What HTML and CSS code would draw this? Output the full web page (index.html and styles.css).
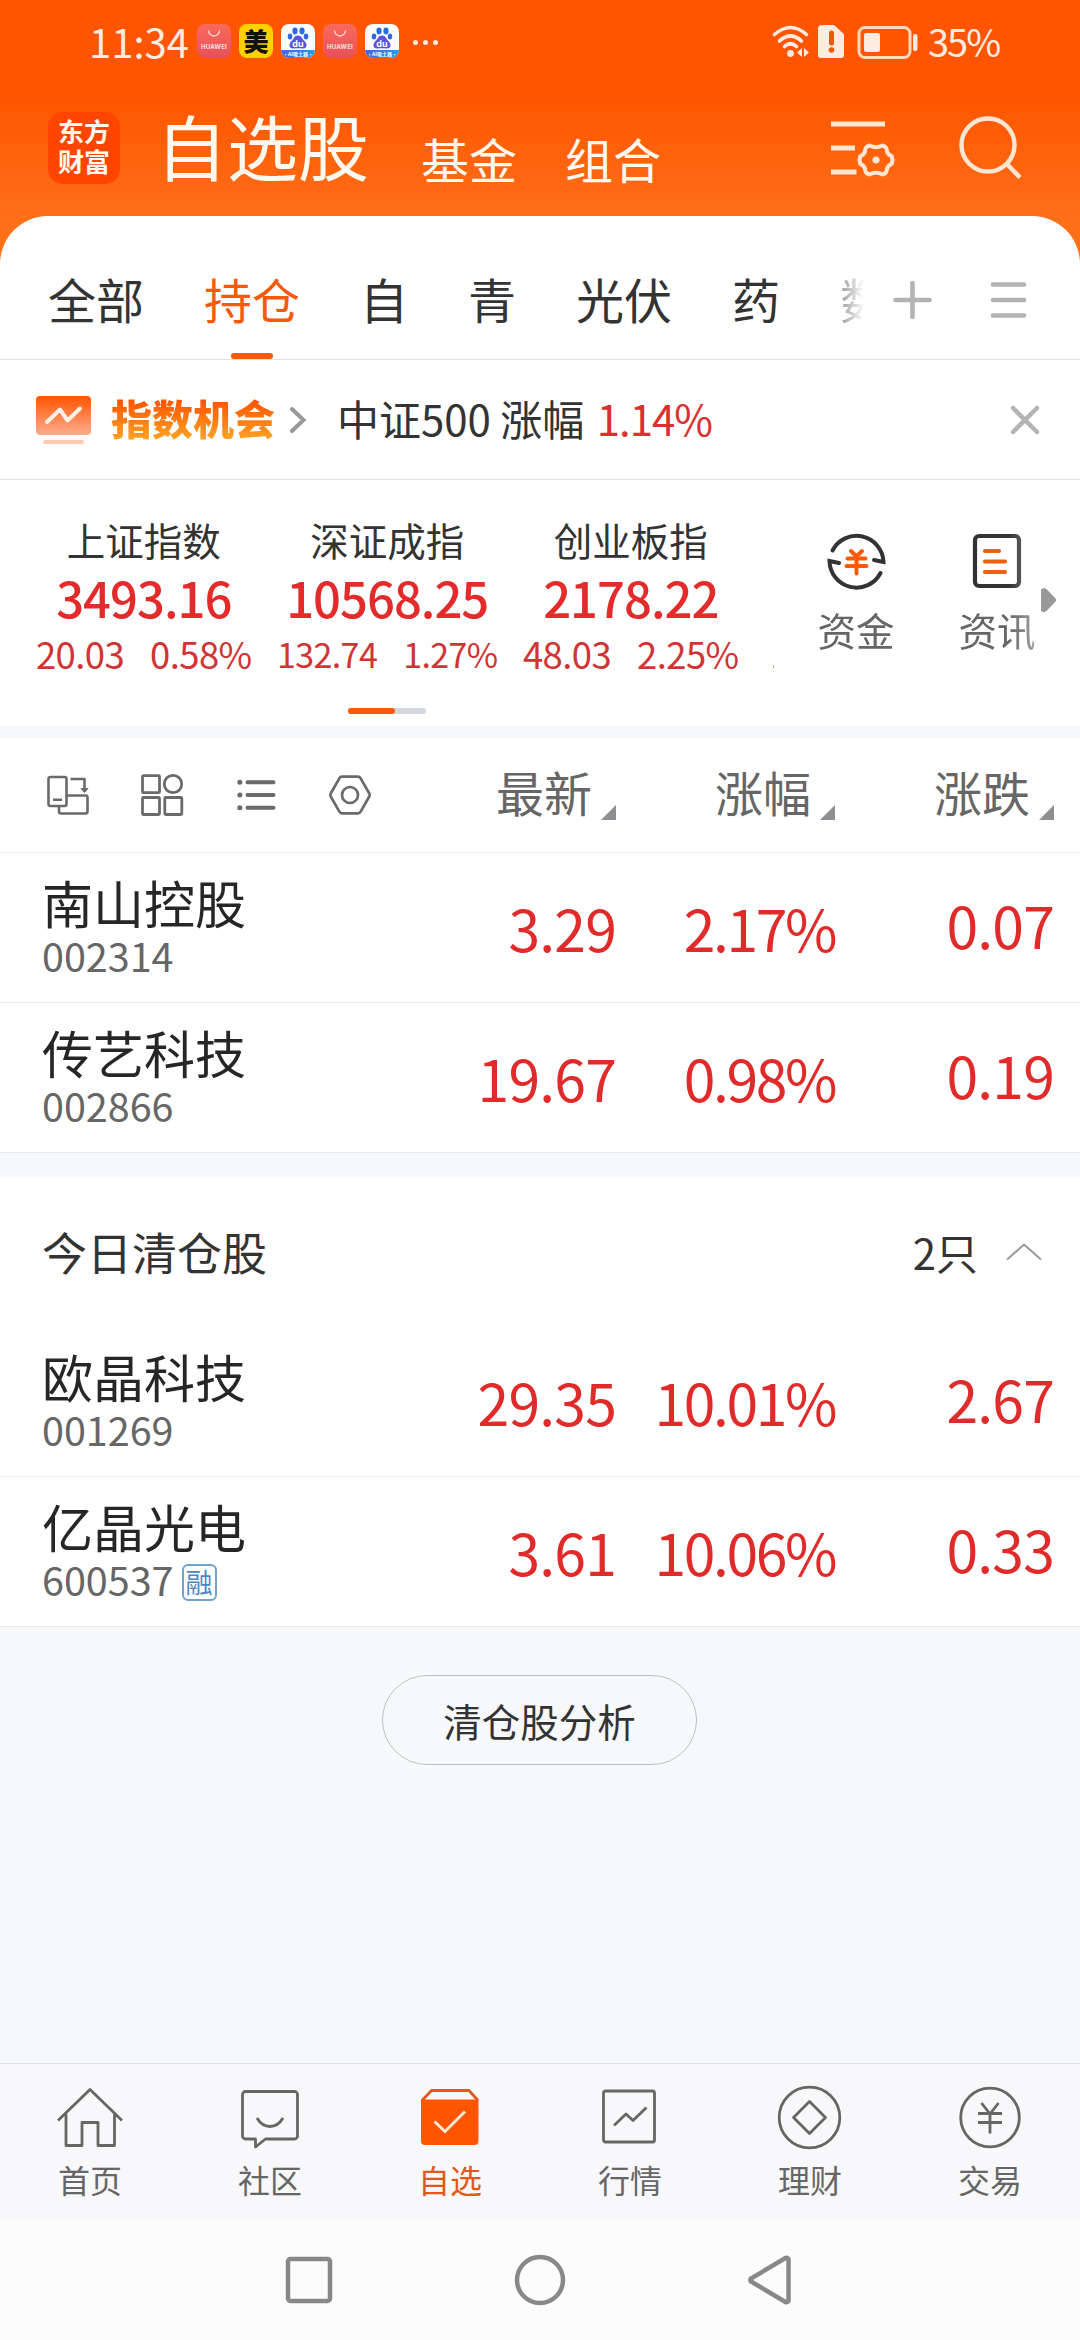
FILE: index.html
```
<!DOCTYPE html>
<html lang="zh-CN">
<head>
    <meta charset="UTF-8">
    <meta name="viewport" content="width=device-width, initial-scale=1.0">
    <title>自选股</title>
    <link rel="stylesheet" href="styles.css">
</head>
<body>
<div class="page">
    <div class="top">
        <!-- 状态栏 -->
        <div class="status">
            <span class="time">11:34</span>
            <div class="apps">
                <span class="app huawei"><svg width="14" height="8" viewBox="0 0 14 8"><path d="M1.500 .5a5.500 5.500 0 0 0 11 0" fill="none" stroke="#ffd9d5" stroke-width="1.300"/></svg>HUAWEI</span>
                <span class="app mei">美</span>
                <span class="app baidu">
                    <svg width="34" height="26" viewBox="0 0 34 26"><g fill="#2a6be0"><ellipse cx="14" cy="7" rx="2.600" ry="3.400"/><ellipse cx="21" cy="7" rx="2.600" ry="3.400"/><ellipse cx="9" cy="12.500" rx="2.300" ry="3"/><ellipse cx="25" cy="12.500" rx="2.300" ry="3"/></g><path d="M17 11.500c4 0 4 3.500 6.500 5.500 4 4 1.500 8-2 7.500-3-.5-6-.5-9 0-3.500.5-6-3.500-2-7.500 2.500-2 2.500-5.500 6.500-5.500z" fill="#5a55dc"/><text x="17" y="22.500" text-anchor="middle" class="du">du</text></svg>
                    <b>·AI吸土器·</b>
                </span>
                <span class="app huawei"><svg width="14" height="8" viewBox="0 0 14 8"><path d="M1.500 .5a5.500 5.500 0 0 0 11 0" fill="none" stroke="#ffd9d5" stroke-width="1.300"/></svg>HUAWEI</span>
                <span class="app baidu">
                    <svg width="34" height="26" viewBox="0 0 34 26"><g fill="#2a6be0"><ellipse cx="14" cy="7" rx="2.600" ry="3.400"/><ellipse cx="21" cy="7" rx="2.600" ry="3.400"/><ellipse cx="9" cy="12.500" rx="2.300" ry="3"/><ellipse cx="25" cy="12.500" rx="2.300" ry="3"/></g><path d="M17 11.500c4 0 4 3.500 6.500 5.500 4 4 1.500 8-2 7.500-3-.5-6-.5-9 0-3.500.5-6-3.500-2-7.500 2.500-2 2.500-5.500 6.500-5.500z" fill="#5a55dc"/><text x="17" y="22.500" text-anchor="middle" class="du">du</text></svg>
                    <b>·AI吸土器·</b>
                </span>
            </div>
            <div class="dots"><i></i><i></i><i></i></div>
            <svg class="signal" width="148" height="36" viewBox="0 0 148 36">
                <g fill="none" stroke="#ffebe0" stroke-width="3.600" stroke-linecap="round">
                    <path d="M2.500 10.500Q18.500-3.500 34.500 10.500"/>
                    <path d="M7.500 17Q18.500 7 29.500 17"/>
                    <path d="M12.500 22.500Q18.500 17 24.500 22.500"/>
                </g>
                <g fill="#ffebe0">
                    <circle cx="18.500" cy="29.500" r="3.400"/>
                    <path d="M30 24v9l-5-4.500zM32 24v9l5-4.500z"/>
                    <path d="M50 1h12l10 9v21a3 3 0 0 1-3 3H49a3 3 0 0 1-3-3V5a4 4 0 0 1 4-4z"/>
                    <rect x="92" y="9" width="16" height="19" rx="2"/>
                    <rect x="141" y="10" width="4.500" height="17" rx="2"/>
                </g>
                <path d="M59.500 9v10" stroke="#e85a10" stroke-width="5" stroke-linecap="round"/>
                <circle cx="59.500" cy="26" r="2.800" fill="#e85a10"/>
                <rect x="87" y="3.500" width="51" height="30" rx="6" fill="none" stroke="#ffd9bd" stroke-width="3"/>
            </svg>
            <span class="power">35%</span>
        </div>
        <!-- 标题 -->
        <div class="header">
            <div class="logo">东方<br>财富</div>
            <span class="title">自选股</span>
            <span class="sub">基金</span>
            <span class="sub">组合</span>
            <svg class="manage" width="68" height="64" viewBox="0 0 68 64" fill="none" stroke="#ffe6d3" stroke-width="5">
                <path d="M1 10h54M1 34h24M1 58h25.500"/>
                <path stroke-width="4" stroke-linejoin="round" d="M39.500 31.500q6.500 3.500 13 0q4.500 1 4.500 6q1 3 4.500 4.500q2 4 0 8q-3.500 1.500-4.500 4.500q0 5-4.500 6q-6.500-3.500-13 0q-4.500-1-4.500-6q-1-3-4.500-4.500q-2-4 0-8q3.500-1.500 4.500-4.500q0-5 4.500-6z"/>
                <circle cx="46" cy="46" r="3.600" fill="#ffe6d3" stroke="none"/>
            </svg>
            <svg class="search" width="64" height="66" viewBox="0 0 64 66" fill="none" stroke="#ffe6d3" stroke-width="4.500">
                <circle cx="30" cy="30" r="26.500"/>
                <path d="M48.500 48.500L62 62.500"/>
            </svg>
        </div>
    </div>

    <div class="panel">
        <!-- 分组 -->
        <div class="tabs">
            <div class="tab-list">
                <span>全部</span>
                <span class="on">持仓</span>
                <span>自</span>
                <span>青</span>
                <span>光伏</span>
                <span>药</span>
                <span class="cut">数</span>
            </div>
            <svg class="plus" width="40" height="40" viewBox="0 0 40 40" stroke="#b3b3b3" stroke-width="4.600" stroke-linecap="round"><path d="M3.500 20h34M20.500 3v34"/></svg>
            <svg class="menu" width="40" height="40" viewBox="0 0 40 40" stroke="#b3b3b3" stroke-width="4.600" stroke-linecap="round"><path d="M5 4.500h31M5 20h31M5 35.500h31"/></svg>
        </div>
        <!-- 指数机会 -->
        <div class="notice">
            <svg width="56" height="50" viewBox="0 0 56 50">
                <defs><linearGradient id="g" x1="0" y1="0" x2="0" y2="1"><stop offset="0" stop-color="#ff5500"/><stop offset="1" stop-color="#ffac8c"/></linearGradient></defs>
                <rect x="0" y="1" width="55" height="39" rx="4" fill="url(#g)"/>
                <rect x="7" y="45" width="41" height="4" rx="2" fill="#ffc8b3"/>
                <path d="M11 27L24 14.500l7.500 11L44 13.500" fill="none" stroke="#fff0e8" stroke-width="4" stroke-linecap="round" stroke-linejoin="round"/>
            </svg>
            <b class="chance">指数机会</b>
            <svg class="more" width="18" height="30" viewBox="0 0 18 30" fill="none" stroke="#999" stroke-width="4" stroke-linecap="round"><path d="M3 4l11.500 11L3 26"/></svg>
            <span class="msg">中证500 涨幅 <em>1.14%</em></span>
            <svg class="close" width="30" height="30" viewBox="0 0 30 30" stroke="#b3b3b3" stroke-width="4.500" stroke-linecap="round"><path d="M3 3l24 24M27 3L3 27"/></svg>
        </div>
        <!-- 大盘指数 -->
        <div class="market">
            <div class="index-box">
                <div class="index-list">
                    <div class="index"><p>上证指数</p><b>3493.16</b><div><span>20.03</span><span>0.58%</span></div></div>
                    <div class="index"><p>深证成指</p><b>10568.25</b><div class="small"><span>132.74</span><span>1.27%</span></div></div>
                    <div class="index"><p>创业板指</p><b>2178.22</b><div><span>48.03</span><span>2.25%</span></div></div>
                    <div class="index next"><div class="small">1</div></div>
                </div>
                <div class="pager"><i></i></div>
            </div>
            <div class="links">
                <div class="link">
                    <svg width="60" height="60" viewBox="0 0 60 60" fill="none" stroke="#333" stroke-width="4" stroke-linecap="round">
                        <path d="M6.500 19.500A27 27 0 0 1 57.500 31L48 29"/>
                        <path d="M54.500 42A27 27 0 0 1 3.500 30L13 32"/>
                        <path d="M25 20l5.500 5.500 5.500-5.500M30.500 25.500V42.500M21.500 27.500h18M20.500 35h20" stroke="#ff5a0a"/>
                    </svg>
                    <span>资金</span>
                </div>
                <div class="link">
                    <svg width="60" height="60" viewBox="0 0 60 60" fill="none" stroke="#333" stroke-width="4.200" stroke-linecap="round">
                        <rect x="8" y="5" width="44" height="50" rx="4"/>
                        <path d="M18 20h14M18 30.500h20M18 41h20" stroke="#f0600f"/>
                    </svg>
                    <span>资讯</span>
                </div>
            </div>
            <svg class="arrow" width="16" height="26" viewBox="0 0 16 26"><path d="M0 2.500Q3-.5 6 2.500l8.500 9q1.500 1.500 0 3l-8.500 9Q3 26.500 0 24z" fill="#999"/></svg>
        </div>
    </div>

    <!-- 持仓列表 -->
    <div class="list">
        <div class="thead">
            <div class="tools">
                <svg width="44" height="44" viewBox="0 0 44 44" fill="none" stroke="#6a6a6a" stroke-width="2.600" stroke-linejoin="round">
                    <rect x="2.500" y="4" width="18" height="29" rx="2"/>
                    <path d="M7 26.800h9M24.500 6H38.500v10M13 33v5.500a2 2 0 0 0 2 2H39.500a2 2 0 0 0 2-2V24.500a2 2 0 0 0-2-2H20.500"/>
                    <path d="M35 15.500h7l-3.500 4z" fill="#6a6a6a" stroke-width="1"/>
                </svg>
                <svg width="44" height="44" viewBox="0 0 44 44" fill="none" stroke="#6a6a6a" stroke-width="2.800">
                    <rect x="2.500" y="2.700" width="17" height="17" rx="1"/><circle cx="33" cy="11" r="8.700"/>
                    <rect x="2.500" y="24.500" width="17" height="17" rx="1"/><rect x="24.800" y="24.500" width="17" height="17" rx="1"/>
                </svg>
                <svg width="44" height="44" viewBox="0 0 44 44" fill="none" stroke="#6a6a6a" stroke-width="4" stroke-linecap="round">
                    <path d="M13.500 9.200h26M13.500 22h26M13.500 34.800h26"/><path d="M5.800 9.200h.1M5.800 22h.1M5.800 34.800h.1" stroke-width="5"/>
                </svg>
                <svg width="44" height="44" viewBox="0 0 44 44" fill="none" stroke="#6a6a6a" stroke-width="2.700" stroke-linejoin="round">
                    <path d="M14 3.700H30a3 3 0 0 1 2.500 1.500L41.300 20.500a3 3 0 0 1 0 3L32.500 38.800a3 3 0 0 1-2.500 1.500H14a3 3 0 0 1-2.500-1.500L2.700 23.500a3 3 0 0 1 0-3L11.500 5.200A3 3 0 0 1 14 3.700z"/><circle cx="22" cy="22" r="8"/>
                </svg>
            </div>
            <div class="sort">最新<i></i></div>
            <div class="sort">涨幅<i></i></div>
            <div class="sort">涨跌<i></i></div>
        </div>
        <div class="row">
            <div class="name"><p>南山控股</p><span>002314</span></div>
            <div class="num">3.29</div><div class="num pct">2.17%</div><div class="num diff">0.07</div>
        </div>
        <div class="row">
            <div class="name"><p>传艺科技</p><span>002866</span></div>
            <div class="num">19.67</div><div class="num pct">0.98%</div><div class="num diff">0.19</div>
        </div>
    </div>

    <!-- 今日清仓股 -->
    <div class="list cleared">
        <div class="group">
            <span class="group-name">今日清仓股</span>
            <span class="count">2只</span>
            <svg width="36" height="18" viewBox="0 0 36 18" fill="none" stroke="#999" stroke-width="2"><path d="M1 16.500L18 1.500l17 15"/></svg>
        </div>
        <div class="row">
            <div class="name"><p>欧晶科技</p><span>001269</span></div>
            <div class="num">29.35</div><div class="num pct">10.01%</div><div class="num diff">2.67</div>
        </div>
        <div class="row">
            <div class="name"><p>亿晶光电</p><span>600537</span><i class="tag">融</i></div>
            <div class="num">3.61</div><div class="num pct">10.06%</div><div class="num diff">0.33</div>
        </div>
    </div>
    <div class="analysis"><a class="btn">清仓股分析</a></div>

    <!-- 底部导航 -->
    <div class="tabbar">
        <div class="item">
            <svg width="66" height="66" viewBox="0 0 66 66"><path d="M1 35.500L33 4.500l32 31M9 29v31.500h16V37.500h16v23h16.500V29"/></svg>
            <span>首页</span>
        </div>
        <div class="item">
            <svg width="66" height="66" viewBox="0 0 66 66"><path d="M8.500 6.500h49a3 3 0 0 1 3 3V51a3 3 0 0 1-3 3H28.500L18.500 62v-8H8.500a3 3 0 0 1-3-3V9.500a3 3 0 0 1 3-3z"/><path d="M20 33q5 8.500 13 8.500T46 33"/></svg>
            <span>社区</span>
        </div>
        <div class="item on">
            <svg width="66" height="66" viewBox="0 0 66 66"><path d="M5 15.500L14.500 5.500H52L61 15.500"/><path d="M4 14.500h57.500V56a4 4 0 0 1-4 4H8a4 4 0 0 1-4-4z" class="fill"/><path d="M17.500 36.500L28 46.500 48 26.500" class="check"/></svg>
            <span>自选</span>
        </div>
        <div class="item">
            <svg width="66" height="66" viewBox="0 0 66 66"><rect x="6.500" y="6" width="51" height="51" rx="2"/><path d="M17 40.500L29 29l7 6.500L49.500 22.500"/></svg>
            <span>行情</span>
        </div>
        <div class="item">
            <svg width="66" height="66" viewBox="0 0 66 66"><circle cx="32.500" cy="32.500" r="30.300"/><path d="M32.500 16.500L48.500 32.500 32.500 48.500 16.500 32.500z"/></svg>
            <span>理财</span>
        </div>
        <div class="item">
            <svg width="66" height="66" viewBox="0 0 66 66"><circle cx="33" cy="32.500" r="29.300"/><path d="M24.500 18l8.500 11L41.500 18M33 29v19.500M21 28.500h24M21 37.500h24"/></svg>
            <span>交易</span>
        </div>
    </div>
    <div class="nav">
        <svg width="52" height="52" viewBox="0 0 52 52"><rect x="5" y="5" width="42" height="42" rx="2.500"/></svg>
        <svg width="52" height="52" viewBox="0 0 52 52"><circle cx="26" cy="26" r="23"/></svg>
        <svg width="52" height="52" viewBox="0 0 52 52"><path d="M43.500 5.500v41a2 2 0 0 1-3 1.500L6 27.500a2 2 0 0 1 0-3L40.500 4a2 2 0 0 1 3 1.500z"/></svg>
    </div>
</div>
</body>
</html>
```
FILE: styles.css
```
*{ margin: 0; padding: 0; box-sizing: border-box; }
body{
    width: 1080px;
    font-family: "Noto Sans CJK SC", sans-serif;
    color: #333;
    background: #f6f8fa;
}
i, em{ font-style: normal; }
svg{ display: block; flex: none; }
.page{
    display: flex;
    flex-direction: column;
    height: 2340px;
    overflow: hidden;
}

/* 顶部橙色区域 */
.top{
    height: 264px;
    background: linear-gradient(#ff5500 96px, #ff6f18 216px, #ff7018);
}
.status{
    display: flex;
    align-items: center;
    height: 84px;
    padding-left: 89px;
    color: #ffebe0;
}
.time{ width: 108px; font-size: 40px; line-height: 80px; padding-bottom: 2px; }
.apps{ display: flex; gap: 8px; padding-bottom: 2px; }
.app{
    display: flex;
    flex-direction: column;
    align-items: center;
    width: 34px;
    height: 34px;
    border-radius: 8px;
    overflow: hidden;
}
.huawei{
    padding-top: 6px;
    background: linear-gradient(#fb6a5c, #e8505b);
    color: #ffe3e0;
    font: bold 6px/10px Inter, sans-serif;
    letter-spacing: .3px;
}
.huawei svg{ margin-bottom: 4px; }
.mei{ background: #ffd000; color: #111; font-size: 25px; font-weight: 900; line-height: 32px; }
.baidu{ background: #fff; }
.baidu b{
    width: 34px;
    height: 8px;
    background: linear-gradient(to right, #4a62e8, #1ba0f0);
    color: #fff;
    font-size: 5px;
    line-height: 7px;
    text-align: center;
    white-space: nowrap;
}
.du{ font: bold 9px Inter, sans-serif; fill: #fff; }
.dots{ display: flex; gap: 5px; margin-left: 14px; }
.dots i{ width: 5px; height: 5px; border-radius: 50%; background: #ffebe0; }
.signal{ margin-left: 334px; }
.power{ margin-left: 8px; font-size: 38px; letter-spacing: -2px; line-height: 80px; padding-bottom: 2px; }

.header{ display: flex; height: 132px; padding: 28px 0 0 48px; color: #fffaf0; }
.logo{
    width: 72px;
    height: 72px;
    padding-top: 4px;
    border-radius: 15px;
    background: #ff4500;
    font-size: 26px;
    font-weight: 700;
    line-height: 30px;
    text-align: center;
}
.title{ margin: -20px 28px 0 36px; font-size: 71px; line-height: 104px; }
.sub{ margin: 11px 48px 0 0; font-size: 48px; line-height: 70px; }
.title + .sub{ margin-left: 24px; }
.manage{ margin: 2px 60px 0 121px; }
.search{ margin-top: 3px; }
.title, .sub{ white-space: nowrap; }

/* 白色面板 */
.panel{
    height: 510px;
    margin-top: -48px;
    border-radius: 48px 48px 0 0;
    background: #fff;
}
.tabs{
    display: flex;
    height: 144px;
    border-bottom: 1px solid #e3e3e3;
}
.tab-list{
    display: flex;
    gap: 60px;
    width: 864px;
    padding-left: 48px;
    overflow: hidden;
    font-size: 48px;
    line-height: 165px;
    white-space: nowrap;
}
.tab-list .on{
    display: flex;
    flex-direction: column;
    align-items: center;
    color: #f55a0c;
}
.tab-list .on::after{
    content: "";
    width: 42px;
    height: 6px;
    margin-top: -28px;
    border-radius: 3px;
    background: #f55a0c;
}
.cut{
    width: 24px;
    background: linear-gradient(to right, #999, #fff 24px);
    background-clip: text;
    -webkit-background-clip: text;
    color: transparent;
}
.plus{ margin: 64px 0 0 28px; }
.menu{ margin: 64px 0 0 56px; }

.notice{
    display: flex;
    align-items: center;
    height: 120px;
    padding-left: 36px;
    border-bottom: 1px solid #e3e3e3;
}
.chance{
    margin: 0 14px 5px 19px;
    font-size: 41px;
    font-weight: 900;
    line-height: 60px;
    background: linear-gradient(#ff5500 14px, #ff9e22 50px);
    background-clip: text;
    -webkit-background-clip: text;
    color: transparent;
}
.msg{ width: 673px; margin-left: 30px; padding-bottom: 5px; font-size: 42px; white-space: pre; }
.msg em{ margin-left: 3px; letter-spacing: -1px; color: #d93030; }

.market{ display: flex; height: 246px; padding-top: 33px; }
.index-box{ width: 774px; overflow: hidden; }
.index-list{ display: flex; width: 1000px; padding-left: 22px; color: #d03434; }
.index{ width: 243.500px; text-align: center; white-space: nowrap; }
.index p{ font-size: 38.500px; line-height: 52px; color: #333; }
.index b{
    display: block;
    padding-top: 2px;
    font-size: 49px;
    font-weight: 500;
    line-height: 60px;
    letter-spacing: -1px;
    color: #e32b2b;
}
.index div{
    display: flex;
    justify-content: center;
    gap: 26px;
    font-size: 36.500px;
    line-height: 53px;
    letter-spacing: -.6px;
}
.index .small{ font-size: 34px; }
.next{ padding: 114px 0 0 18px; }
.next .small{ justify-content: flex-start; }
.pager{ width: 78px; height: 6px; margin: 28px auto 0; border-radius: 3px; background: #d4d7dc; }
.pager i{ display: block; width: 47px; height: 6px; border-radius: 3px; background: #f95a0a; }
.links{
    display: flex;
    gap: 63px;
    margin-left: 43px;
    padding-top: 18px;
    -webkit-mask-image: linear-gradient(to right, #000 192px, rgba(0,0,0,.6) 219px);
    mask-image: linear-gradient(to right, #000 192px, rgba(0,0,0,.6) 219px);
}
.link{
    display: flex;
    flex-direction: column;
    align-items: center;
    gap: 13px;
    width: 78px;
    font-size: 38.500px;
    line-height: 50px;
    color: #666;
    white-space: nowrap;
}
.arrow{ margin: 74px 0 0 5px; }

/* 股票列表 */
.list{ margin-top: 12px; background: #fff; }
.thead, .row{
    display: grid;
    grid-template-columns: 1fr 219px 219px 219px;
    padding: 0 26px 0 42px;
    border-bottom: 1px solid #ebebeb;
}
.thead{ height: 115px; color: #666; }
.tools{ display: flex; gap: 50px; padding: 35px 0 0 4px; }
.sort{
    display: flex;
    justify-content: flex-end;
    align-items: flex-end;
    gap: 9px;
    height: 82px;
    font-size: 48px;
    line-height: 58px;
}
.sort i{
    width: 15px;
    height: 15px;
    background: #8e8e93;
    clip-path: polygon(100% 0, 100% 100%, 0 100%);
}
.row{ height: 150px; }
.name{ padding-top: 19px; }
.name p{ font-size: 51px; line-height: 60px; color: #262626; }
.name span{ font-size: 39.500px; line-height: 46px; color: #666; }
.num{
    font-size: 57px;
    line-height: 149px;
    letter-spacing: -.8px;
    text-align: right;
    color: #e02b2b;
}
.pct{ letter-spacing: -2.400px; }
.diff{ line-height: 143px; }
.tag{
    display: inline-block;
    width: 35px;
    height: 37px;
    margin-left: 8px;
    border: 2px solid #6fa3d0;
    border-radius: 6px;
    font-size: 27px;
    line-height: 31px;
    text-align: center;
    vertical-align: 3px;
    color: #4a88c4;
}
.cleared{ margin-top: 24px; }
.group{
    display: flex;
    align-items: center;
    height: 150px;
    padding: 0 38px 0 42px;
}
.group-name{ flex: 1; padding-bottom: 2px; font-size: 45px; }
.count{ margin-right: 28px; padding-bottom: 2px; font-size: 42px; }

.analysis{ flex: 1; padding: 48px 0 0 382px; }
.btn{
    display: block;
    width: 315px;
    height: 90px;
    border: 1px solid #c0c0c2;
    border-radius: 45px;
    font-size: 38.500px;
    line-height: 88px;
    text-align: center;
}

/* 底部 */
.tabbar{
    display: flex;
    height: 157px;
    border-top: 1px solid #dedfe1;
    background: #f8f8fa;
}
.item{
    display: flex;
    flex-direction: column;
    align-items: center;
    gap: 8px;
    width: 180px;
    padding-top: 21px;
    font-size: 32px;
    line-height: 40px;
    color: #666;
}
.item svg{ fill: none; stroke: #666; stroke-width: 2.800; stroke-linejoin: round; }
.item.on{ color: #e0581a; }
.item.on svg{ stroke: #e0581a; }
.item .fill{ fill: #ff5500; stroke: none; }
.item .check{ stroke: #ffe9d6; stroke-width: 3; stroke-linejoin: miter; }
.nav{
    display: flex;
    justify-content: center;
    gap: 179px;
    height: 120px;
    padding-top: 34px;
    background: #fcfcfc;
}
.nav svg{ fill: none; stroke: #888; stroke-width: 4.500; }
```
